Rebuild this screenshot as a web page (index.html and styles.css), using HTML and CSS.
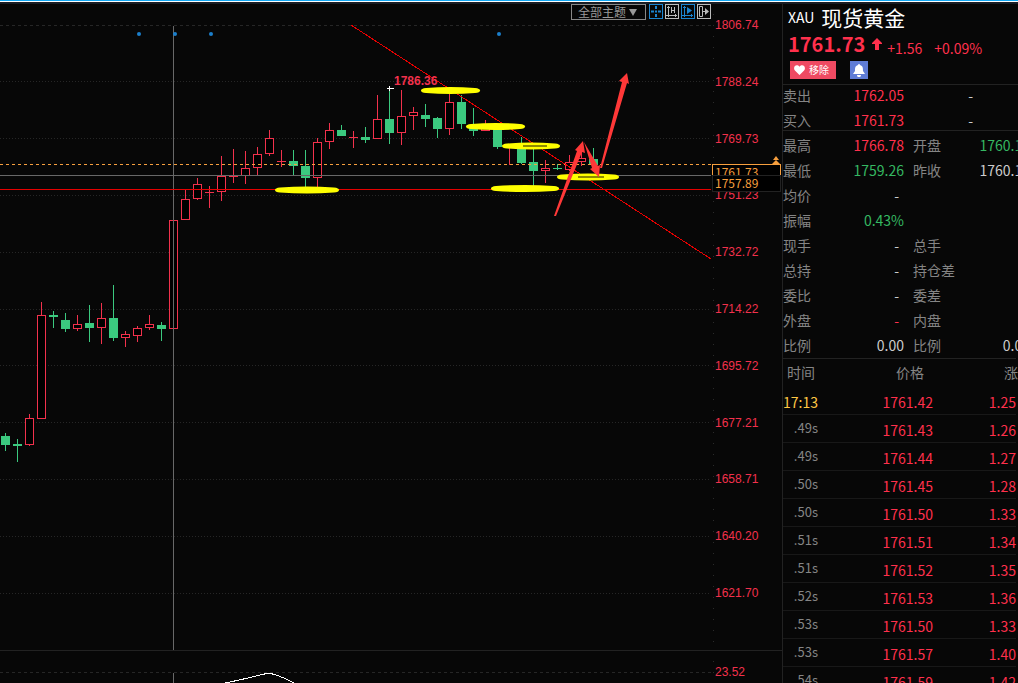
FILE: index.html
```
<!DOCTYPE html>
<html lang="zh-CN">
<head>
  <meta charset="UTF-8">
  <meta name="viewport" content="width=device-width, initial-scale=1.0">
  <title>XAU 现货黄金</title>
  <link rel="stylesheet" href="styles.css">
</head>
<body>
  <div class="app">
    <main class="chart">
      <div class="toolbar">
        <label class="theme">
          <select aria-label="主题">
            <option>全部主题</option>
          </select>
        </label>
        <button class="tool active" aria-label="十字线">
          <svg viewBox="0 0 14 15"><path d="M7 2v3M7 10v3M2 7.5h3M9 7.5h3M6 7.5h2" stroke-width="2" /></svg>
        </button>
        <button class="tool" aria-label="坐标">
          <svg viewBox="0 0 14 15"><path d="M3.5 2v11M1 11.5h11M2 3.5h3M6.5 3v6M6.5 6.5h3M9.5 3v6M10.5 10v3" /></svg>
        </button>
        <button class="tool active" aria-label="回放">
          <svg viewBox="0 0 14 15"><path d="M3.5 2v11M1 11.5h11M2 3.5h3M10.5 10v3" /><path class="solid" d="M6 3l5 3.5L6 10z" /></svg>
        </button>
        <button class="tool" aria-label="右移">
          <svg viewBox="0 0 14 15"><path d="M2.5 2.5h3v10h-3zM5 7.5h6" /><path class="solid" d="M8 4l4 3.5L8 11z" /></svg>
        </button>
      </div>

      <section class="pane main-pane">
        <svg class="plot" viewBox="0 4 711 646" shape-rendering="crispEdges">
          <g id="grid"></g>
          <g id="candles"></g>

          <!-- price lines -->
          <path class="current" d="M0 164.5H711" />
          <path class="cross" d="M0 175.5H711M173.5 26V650" />
          <path class="support" d="M0 189.5H711" />
          <path class="support" d="M351 25L711 259" />

          <g class="events" shape-rendering="auto">
            <circle cx="139" cy="34" r="2" />
            <circle cx="175" cy="34" r="2" />
            <circle cx="211" cy="34" r="2" />
            <circle cx="499" cy="34" r="2" />
          </g>

          <path class="peak" d="M387 88.5h7M389.5 86v5" />
          <text class="peak-label" x="394" y="85">1786.36</text>

          <g id="marks" shape-rendering="auto"></g>

          <!-- forecast arrows -->
          <g class="arrows" shape-rendering="auto">
            <polygon points="554,216 577,151 575,150 583,141 585,153 582,152 556,216" />
            <polygon points="584,142 598,166 600,165 599,177 590,169 592,168" />
            <polygon points="600,168 622,82 619,81 627,73 629,84 627,83 602,168" />
          </g>
        </svg>
        <div class="axis">
          <ol class="scale">
            <li>1806.74</li>
            <li>1788.24</li>
            <li>1769.73</li>
            <li>1751.23</li>
            <li>1732.72</li>
            <li>1714.22</li>
            <li>1695.72</li>
            <li>1677.21</li>
            <li>1658.71</li>
            <li>1640.20</li>
            <li>1621.70</li>
          </ol>
          <svg class="marker" viewBox="0 0 8 9"><path d="M4 0l3 4H1zM4 4l4 4v1H0V8z" /></svg>
          <span class="tag tag-last">1761.73</span>
          <span class="tag tag-cross">1757.89</span>
        </div>
      </section>

      <section class="pane sub-pane">
        <svg class="plot" viewBox="0 651 711 80" shape-rendering="crispEdges">
          <path class="grid-dash" d="M0 672.5H711" />
          <path class="cross" d="M173.5 673V731" />
          <path class="curve" d="M216 685L230 682L248 678L260 675L269 673L276 675L284 678L294 683L304 690" />
        </svg>
        <div class="axis">
          <ol class="scale">
            <li>23.52</li>
          </ol>
        </div>
      </section>
    </main>

    <aside class="panel">
      <header class="quote-head">
        <h1><small>XAU</small> 现货黄金</h1>
        <div class="price-row">
          <strong>1761.73</strong>
          <svg viewBox="0 0 10 12"><path d="M5 0l5 5v1H7v6H3V6H0V5z" /></svg>
          <span class="diff">+1.56</span>
          <span>+0.09%</span>
        </div>
        <div class="actions">
          <button class="remove">
            <svg viewBox="0 0 12 11"><path d="M6 11L1 6C-2 2 3-2 6 2c3-4 8 0 5 4z" /></svg>移除
          </button>
          <button class="alert" aria-label="提醒">
            <svg viewBox="0 0 12 13"><path d="M6 0c1 0 1 1 1 1 3 1 3 3 3 6l2 3H0l2-3c0-3 0-5 3-6 0 0 0-1 1-1zM4 11h4c0 3-4 3-4 0z" /></svg>
          </button>
        </div>
      </header>

      <table class="quote">
        <tr><th>卖出</th><td class="up">1762.05</td><td class="mid">-</td></tr>
        <tr><th>买入</th><td class="up">1761.73</td><td class="mid">-</td></tr>
      </table>

      <table class="quote detail">
        <tr><th>最高</th><td class="up">1766.78</td><th>开盘</th><td class="down">1760.10</td></tr>
        <tr><th>最低</th><td class="down">1759.26</td><th>昨收</th><td>1760.17</td></tr>
        <tr><th>均价</th><td class="none">-</td><th></th><td></td></tr>
        <tr><th>振幅</th><td class="down">0.43%</td><th></th><td></td></tr>
        <tr><th>现手</th><td class="none">-</td><th>总手</th><td></td></tr>
        <tr><th>总持</th><td class="none">-</td><th>持仓差</th><td></td></tr>
        <tr><th>委比</th><td class="none">-</td><th>委差</th><td></td></tr>
        <tr><th>外盘</th><td class="none up">-</td><th>内盘</th><td></td></tr>
        <tr><th>比例</th><td>0.00</td><th>比例</th><td>0.00</td></tr>
      </table>

      <table class="ticks">
        <thead>
          <tr><th>时间</th><th>价格</th><th>涨跌</th></tr>
        </thead>
        <tbody>
          <tr><td class="minute">17:13</td><td>1761.42</td><td>1.25</td></tr>
          <tr><td>.49s</td><td>1761.43</td><td>1.26</td></tr>
          <tr><td>.49s</td><td>1761.44</td><td>1.27</td></tr>
          <tr><td>.50s</td><td>1761.45</td><td>1.28</td></tr>
          <tr><td>.50s</td><td>1761.50</td><td>1.33</td></tr>
          <tr><td>.51s</td><td>1761.51</td><td>1.34</td></tr>
          <tr><td>.51s</td><td>1761.52</td><td>1.35</td></tr>
          <tr><td>.52s</td><td>1761.53</td><td>1.36</td></tr>
          <tr><td>.53s</td><td>1761.50</td><td>1.33</td></tr>
          <tr><td>.53s</td><td>1761.57</td><td>1.40</td></tr>
          <tr><td>.54s</td><td>1761.59</td><td>1.42</td></tr>
        </tbody>
      </table>
    </aside>
  </div>

  <script src="chart.js"></script>
</body>
</html>
```
FILE: styles.css
```
* { box-sizing: border-box; }
body {
  margin: 0;
  background: #070707;
  color: #ccc;
  font-family: "Noto Sans CJK SC", sans-serif;
  font-size: 14px;
}
button, select {
  font: inherit;
  padding: 0;
  margin: 0;
}
.app {
  display: grid;
  grid-template-columns: minmax(0, 1fr) 236px;
  height: 100vh;
  overflow: hidden;
  border-top: 1px solid #12a8f4;
  box-shadow: inset 0 1px #fff, inset 0 3px #191e26;
  padding-top: 3px;
}

/* Chart */
.chart {
  position: relative;
  display: flex;
  flex-direction: column;
  min-width: 0;
  overflow: hidden;
}
.toolbar {
  position: absolute;
  top: 0;
  right: 71px;
  display: flex;
  gap: 2px;
}
.theme {
  position: relative;
  width: 75px;
  height: 16px;
  margin-right: 1px;
}
.theme select {
  display: block;
  appearance: none;
  width: 100%;
  height: 100%;
  padding-left: 6px;
  border: 1px solid #888;
  border-radius: 0;
  background: #070707;
  color: #999;
  font-size: 12px;
  line-height: 14px;
}
.theme::after {
  content: "";
  position: absolute;
  top: 5px;
  right: 9px;
  border: 4px solid transparent;
  border-top: 7px solid #999;
  border-bottom: 0;
}
.tool {
  width: 14px;
  height: 15px;
  border: 0;
  background: none;
  color: #bbb;
}
.tool.active { color: #1b84d0; }
.tool svg {
  display: block;
  width: 14px;
  height: 15px;
  fill: none;
  stroke: currentColor;
  outline: 1px solid currentColor;
  outline-offset: -1px;
}
.tool .solid {
  fill: currentColor;
  stroke: none;
}
.pane {
  display: grid;
  grid-template-columns: minmax(0, 1fr) 71px;
}
.sub-pane {
  flex: 1;
  align-content: start;
  border-top: 1px solid #222;
}
.plot {
  display: block;
  width: 100%;
  fill: none;
}
.axis {
  position: relative;
  background: repeating-linear-gradient(#070707 0 10px, #2b2b2b 10px 11px) 2px 0 / 1px 100% no-repeat;
}
.scale {
  display: flex;
  flex-direction: column;
  justify-content: space-between;
  height: 100%;
  margin: 0;
  padding: 12px 0 48px 4px;
  list-style: none;
  color: #f2314c;
  font-family: "Liberation Sans", sans-serif;
  font-size: 12px;
  line-height: 18px;
}
.tag {
  position: absolute;
  left: 1px;
  width: 69px;
  height: 17px;
  padding-left: 2px;
  border: 1px solid #222;
  background: #000;
  color: #f79f3e;
  font-size: 12px;
  line-height: 14px;
}
.tag-last {
  top: 160px;
  border-color: #f79f3e;
}
.tag-cross { top: 171px; }
.marker {
  position: absolute;
  top: 152px;
  right: 2px;
  width: 8px;
  fill: #f79f3e;
}
.grid-dot { stroke: #262626; stroke-dasharray: 1 2; }
.grid-dash { stroke: #262626; stroke-dasharray: 3 3; }
.current { stroke: #f79f3e; stroke-dasharray: 3 3; }
.cross { stroke: #686868; }
.support { stroke: #e60000; }
.curve, .peak { stroke: #fff; }
.events { fill: #1b7fcc; }
.peak-label {
  fill: #f2314c;
  font: bold 12px "Liberation Sans", sans-serif;
}
.rise { fill: #f2314c; }
.rise-body { fill: #000; stroke: #f2314c; }
.fall { fill: #3bc97f; }
.mark { fill: #ff0; }
.mark-slit { fill: #8f8b00; }
.arrows { fill: #ff3838; }

/* Quote panel */
.panel {
  min-width: 0;
  overflow: hidden;
  border-left: 1px solid #222;
}
.quote-head {
  height: 80px;
  padding-left: 5px;
}
h1 {
  margin: 0;
  color: #fff;
  font-size: 21px;
  font-weight: normal;
  line-height: 26px;
  white-space: nowrap;
}
h1 small {
  display: inline-block;
  margin-right: 2px;
  font-size: 14px;
  vertical-align: top;
}
.price-row {
  display: flex;
  align-items: center;
  height: 28px;
  margin-bottom: 3px;
  color: #ff304c;
}
.price-row strong {
  font-size: 20px;
  line-height: 28px;
}
.price-row svg {
  width: 10px;
  margin: 0 5px 0 7px;
  fill: #ff304c;
}
.price-row span { padding-top: 8px; }
.price-row .diff { margin-right: 12px; }
.actions {
  display: flex;
  gap: 14px;
  padding-left: 2px;
}
.actions button {
  display: flex;
  align-items: center;
  justify-content: center;
  height: 18px;
  border: 0;
  color: #fff;
}
.actions svg { fill: #fff; }
.actions .remove {
  gap: 4px;
  width: 46px;
  padding: 0 3px 2px 0;
  background: #ef4a62;
  font-size: 10px;
}
.remove svg {
  width: 11px;
  margin-top: 2px;
}
.alert {
  width: 18px;
  background: #5f7cd6;
}
.alert svg { width: 12px; }
table {
  table-layout: fixed;
  border-collapse: separate;
  border-spacing: 0;
  white-space: nowrap;
}
th {
  font-weight: normal;
  color: #858585;
}
.quote {
  width: 247px;
  border-top: 1px solid #222;
}
.quote th, .quote td {
  padding: 1px 0 6px;
  line-height: 18px;
}
.quote tr:last-child > * { padding-bottom: 1px; }
.quote th {
  width: 50px;
  text-align: left;
}
.quote td { text-align: right; }
.quote td:nth-child(2) { width: 71px; }
.quote .mid { padding-right: 57px; }
.quote .none { padding-right: 5px; }
.detail {
  padding: 4px 0 3px;
}
.detail th + td + th {
  width: 60px;
  padding-left: 9px;
}
.up { color: #ff304c; }
.down { color: #35b862; }
.ticks {
  width: 233px;
  border-top: 1px solid #222;
}
.ticks th, .ticks td {
  height: 28px;
  padding: 0;
  line-height: 20px;
  text-align: right;
}
.ticks thead th { padding-bottom: 2px; }
.ticks th:first-child {
  width: 35px;
  padding-right: 3px;
}
.ticks th:nth-child(2) {
  width: 115px;
  padding-right: 9px;
}
.ticks th:last-child {
  padding-left: 71px;
  text-align: left;
}
.ticks td {
  padding-top: 3px;
  border-bottom: 1px solid #181818;
  color: #ff304c;
}
.ticks td:first-child {
  padding: 0 0 1px;
  color: #858585;
  font-size: 13px;
}
.ticks .minute:first-child {
  padding: 3px 0 0;
  color: #ffc845;
  font-size: 14px;
}
```
FILE: chart.js
```
const NS = 'http://www.w3.org/2000/svg';

function add(parent, tag, attrs) {
  const el = document.createElementNS(NS, tag);
  for (const key in attrs) el.setAttribute(key, attrs[key]);
  parent.appendChild(el);
}

// [up?, high, open/close top, open/close bottom, low]
const candles = [
  [0, 433, 436, 445, 451], [0, 439, 444, 446, 462], [1, 414, 418, 445, 446],
  [1, 302, 315, 419, 419], [0, 311, 315, 317, 328], [0, 313, 320, 329, 332],
  [1, 315, 324, 329, 331], [0, 305, 323, 328, 342], [1, 303, 318, 328, 344],
  [0, 285, 318, 338, 341], [1, 331, 334, 338, 347], [1, 326, 328, 336, 342],
  [1, 315, 324, 328, 330], [0, 322, 325, 329, 341], [1, 220, 220, 329, 329],
  [1, 189, 199, 220, 220], [1, 178, 184, 199, 200], [1, 186, 192, 193, 208],
  [1, 156, 176, 192, 201], [1, 149, 176, 177, 183], [1, 151, 168, 176, 184],
  [1, 147, 154, 168, 175], [1, 130, 138, 154, 156], [1, 150, 161, 162, 167],
  [0, 150, 161, 166, 175], [0, 150, 166, 178, 188], [1, 138, 142, 178, 188],
  [1, 123, 130, 142, 149], [0, 125, 130, 136, 136], [1, 131, 137, 138, 148],
  [0, 127, 137, 140, 143], [1, 95, 119, 139, 139], [0, 88, 119, 133, 144],
  [1, 90, 116, 133, 145], [1, 107, 112, 116, 130], [0, 104, 115, 119, 127],
  [0, 117, 118, 129, 138], [1, 92, 102, 129, 135], [0, 95, 102, 124, 129],
  [0, 108, 127, 131, 136], [1, 120, 127, 131, 131], [0, 127, 129, 147, 149],
  [1, 147, 147, 148, 165], [0, 137, 146, 163, 164], [0, 146, 162, 171, 186],
  [1, 160, 168, 171, 183], [0, 164, 168, 169, 170], [1, 155, 162, 170, 171],
  [1, 150, 158, 162, 166], [0, 148, 159, 165, 166]
];

const candleLayer = document.getElementById('candles');
candles.forEach(([up, high, top, bottom, low], i) => {
  const x = 5 + i * 12;
  add(candleLayer, 'rect', { class: up ? 'rise' : 'fall', x: x, y: high, width: 1, height: low - high });
  if (up && bottom - top > 1) {
    add(candleLayer, 'rect', { class: 'rise-body', x: x - 3.5, y: top + 0.5, width: 8, height: bottom - top - 1 });
  } else {
    add(candleLayer, 'rect', { class: up ? 'rise' : 'fall', x: x - 4, y: top, width: 9, height: bottom - top });
  }
});

const grid = document.getElementById('grid');
add(grid, 'path', { class: 'grid-dash', d: 'M0 25.5H711' });
[81, 138, 195, 252, 309, 365, 422, 479, 536, 593].forEach(y => {
  add(grid, 'path', { class: 'grid-dot', d: `M0 ${y + 0.5}H711` });
});

// highlighter marks: left, right, centre y
const marks = document.getElementById('marks');
[[275, 339, 190], [421, 480, 90.5], [466, 525, 126.5], [502, 560, 146], [491, 559, 188.5], [557, 619, 177]].forEach(([l, r, y]) => {
  const mid = (l + r) / 2;
  add(marks, 'path', {
    class: 'mark',
    d: `M${l} ${y}Q${l} ${y - 2} ${l + 5} ${y - 2.5}Q${mid} ${y - 4.5} ${r - 5} ${y - 2.5}Q${r} ${y - 2} ${r} ${y}Q${r} ${y + 2} ${r - 5} ${y + 2.5}Q${mid} ${y + 4.5} ${l + 5} ${y + 2.5}Q${l} ${y + 2} ${l} ${y}z`
  });
});
add(marks, 'rect', { class: 'mark-slit', x: 523, y: 145, width: 24, height: 2 });
add(marks, 'rect', { class: 'mark-slit', x: 578, y: 176, width: 26, height: 2 });
```
